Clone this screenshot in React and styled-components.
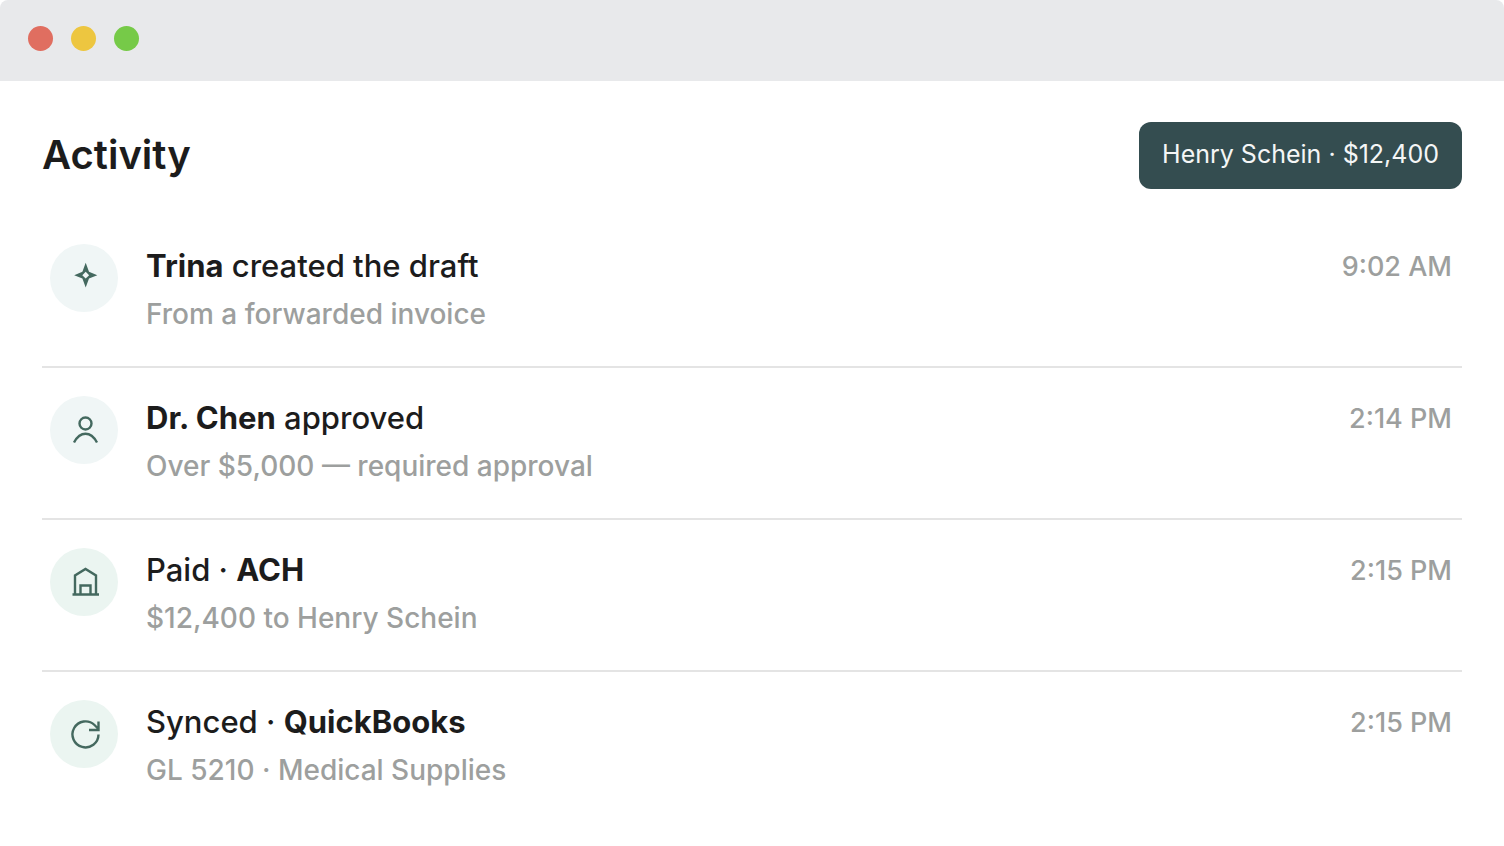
import React from 'react';
import styled, { createGlobalStyle } from 'styled-components';

const colors = {
  ink: '#1c1c1c',
  muted: '#9d9f9e',
  line: '#e4e4e4',
  bar: '#e8e9eb',
  teal: '#344d50',
  icon: '#44695f',
  mist: '#f0f6f6',
  mint: '#ebf5f1',
};

const GlobalStyle = createGlobalStyle`
  * {
    box-sizing: border-box;
  }
  body {
    background: #fff;
    color: ${colors.ink};
    font-family: Inter, 'Liberation Sans', sans-serif;
    margin: 0;
  }
`;

const Window = styled.div`
  border-radius: 8px 8px 0 0;
  overflow: hidden;
`;

const TitleBar = styled.div`
  align-items: center;
  background: ${colors.bar};
  display: flex;
  gap: 18px;
  height: 81px;
  padding: 0 28px 4px;
`;

const Dot = styled.span`
  background: ${props => props.$color};
  border-radius: 50%;
  height: 25px;
  width: 25px;
`;

const Panel = styled.main`
  padding: 41px 42px 24px;
`;

const Header = styled.header`
  align-items: flex-start;
  display: flex;
  justify-content: space-between;
  margin-bottom: 27px;
`;

const Heading = styled.h1`
  font-size: 40px;
  font-weight: 600;
  line-height: 66px;
  margin: 0;
`;

const Tag = styled.span`
  background: ${colors.teal};
  border-radius: 12px;
  color: #f4f6f6;
  font-size: 25px;
  font-weight: 400;
  line-height: 36px;
  padding: 14px 23px 17px;
`;

const List = styled.ul`
  list-style: none;
  margin: 0;
  padding: 0;
`;

const Item = styled.li`
  align-items: flex-start;
  display: flex;
  gap: 28px;
  padding: 28px 10px 34px 8px;
  & + & {
    border-top: 2px solid ${colors.line};
  }
`;

const IconCircle = styled.span`
  align-items: center;
  background: ${props => (props.$done ? colors.mint : colors.mist)};
  border-radius: 50%;
  display: flex;
  flex-shrink: 0;
  height: 68px;
  justify-content: center;
  width: 68px;
  svg {
    fill: none;
    height: 32px;
    stroke: ${colors.icon};
    stroke-width: 2.4;
    width: 32px;
  }
`;

const Details = styled.div`
  flex: 1;
`;

const Title = styled.p`
  font-size: 31px;
  font-weight: 500;
  line-height: 44px;
  margin: 0 0 8px;
  strong {
    font-weight: 700;
  }
`;

const Note = styled.p`
  color: ${colors.muted};
  font-size: 28px;
  font-weight: 500;
  line-height: 36px;
  margin: 0;
`;

const Time = styled.time`
  color: ${colors.muted};
  font-size: 27px;
  font-weight: 500;
  line-height: 46px;
`;

const SparkIcon = () => (
  <svg viewBox="0 0 32 32" aria-hidden="true">
    <path
      d="M17.700 0.800L21 9.800L29.300 13.200L21 16.600L17.700 25.600L14.400 16.600L6.200 13.200L14.400 9.800ZM17.700 9.800L14.300 13.200L17.700 16.600L21.100 13.200Z"
      fill={colors.icon}
      fillRule="evenodd"
      stroke="none"
    />
  </svg>
);

const PersonIcon = () => (
  <svg viewBox="0 0 32 32" aria-hidden="true">
    <circle cx="17.500" cy="9.500" r="6" />
    <path d="M6 28.500C9 23 12.500 19.800 17.500 19.800S26 23 29 28.500" />
  </svg>
);

const BankIcon = () => (
  <svg viewBox="0 0 32 32" aria-hidden="true">
    <path d="M4.500 28.500H31M7 28.500V9.500L17.500 3L28 9.500V28.500M12.500 28.500V19.500H22.500V28.500" />
  </svg>
);

const SyncIcon = () => (
  <svg viewBox="0 0 32 32" aria-hidden="true">
    <path d="M30.500 16.500A13 13 0 1 1 26.500 7L30 10.500M30.500 3.500V12H21" />
  </svg>
);

const events = [
  {
    icon: <SparkIcon />,
    title: (
      <>
        <strong>Trina</strong> created the draft
      </>
    ),
    note: 'From a forwarded invoice',
    time: '9:02 AM',
    dateTime: '09:02',
  },
  {
    icon: <PersonIcon />,
    title: (
      <>
        <strong>Dr. Chen</strong> approved
      </>
    ),
    note: 'Over $5,000 — required approval',
    time: '2:14 PM',
    dateTime: '14:14',
  },
  {
    icon: <BankIcon />,
    title: (
      <>
        Paid · <strong>ACH</strong>
      </>
    ),
    note: '$12,400 to Henry Schein',
    time: '2:15 PM',
    dateTime: '14:15',
    done: true,
  },
  {
    icon: <SyncIcon />,
    title: (
      <>
        Synced · <strong>QuickBooks</strong>
      </>
    ),
    note: 'GL 5210 · Medical Supplies',
    time: '2:15 PM',
    dateTime: '14:15',
    done: true,
  },
];

export default function App() {
  return (
    <>
      <GlobalStyle />
      <Window>
        <TitleBar>
          <Dot $color="#e06e60" />
          <Dot $color="#edc640" />
          <Dot $color="#76ca48" />
        </TitleBar>
        <Panel>
          <Header>
            <Heading>Activity</Heading>
            <Tag>Henry Schein · $12,400</Tag>
          </Header>
          <List>
            {events.map(event => (
              <Item key={event.note}>
                <IconCircle $done={event.done}>{event.icon}</IconCircle>
                <Details>
                  <Title>{event.title}</Title>
                  <Note>{event.note}</Note>
                </Details>
                <Time dateTime={event.dateTime}>{event.time}</Time>
              </Item>
            ))}
          </List>
        </Panel>
      </Window>
    </>
  );
}
